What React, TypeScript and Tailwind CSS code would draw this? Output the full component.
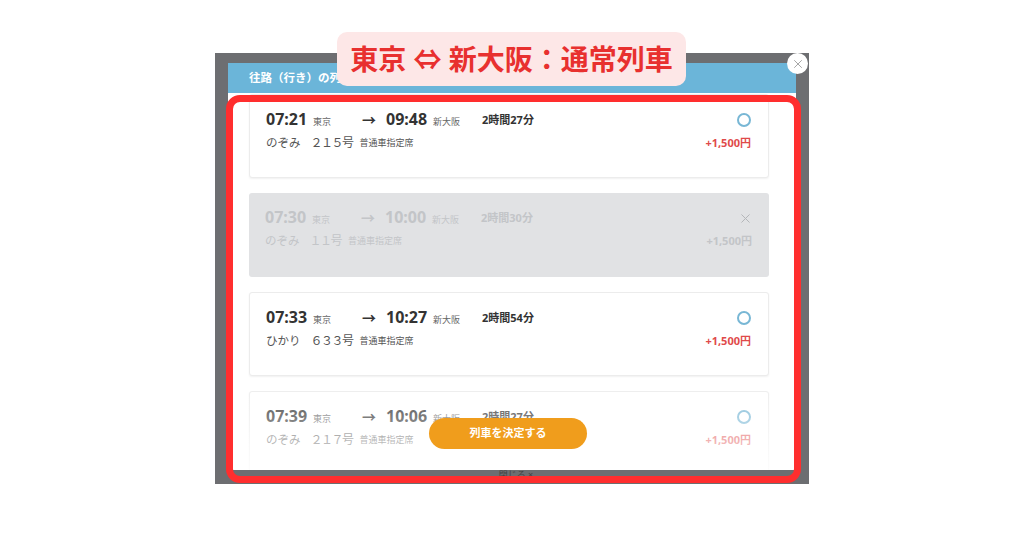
import { X } from "lucide-react"

type Train = {
	dep: string
	arr: string
	dur: string
	name: string
	num: string
	disabled?: boolean
}

const trains: Train[] = [
	{ dep: "07:21", arr: "09:48", dur: "2時間27分", name: "のぞみ", num: "２１５号" },
	{ dep: "07:30", arr: "10:00", dur: "2時間30分", name: "のぞみ", num: "１１号", disabled: true },
	{ dep: "07:33", arr: "10:27", dur: "2時間54分", name: "ひかり", num: "６３３号" },
	{ dep: "07:39", arr: "10:06", dur: "2時間27分", name: "のぞみ", num: "２１７号" },
]

const TrainCard = ({ t }: { t: Train }) => {
	const off = t.disabled
	return (
		<div className={`h-[84px] shrink-0 rounded-[3px] pl-[16px] pr-[17px] pt-[14px] ${off ? "bg-[#e1e2e4] text-[#c3c5c8]" : "bg-white border border-[#ececec] shadow-[0_1px_2px_rgba(0,0,0,0.06)] text-[#333]"}`}>
			<div className="flex items-center h-[22px]">
				<div className="w-[96px] flex items-baseline gap-[6px]">
					<span className="text-[16px] font-bold leading-none">{t.dep}</span>
					<span className={`text-[9px] ${off ? "" : "text-[#666]"}`}>東京</span>
				</div>
				<div className="w-[24px] text-[14px] font-bold leading-none">→</div>
				<div className="w-[96px] flex items-baseline gap-[6px]">
					<span className="text-[16px] font-bold leading-none">{t.arr}</span>
					<span className={`text-[9px] ${off ? "" : "text-[#666]"}`}>新大阪</span>
				</div>
				<div className="text-[11px] font-bold">{t.dur}</div>
				<div className="ml-auto">
					{off ? (
						<X size={15} strokeWidth={1.6} className="text-[#b4b6b9] mr-[-1px]" />
					) : (
						<div className="w-[14px] h-[14px] rounded-full border-2 border-[#78b7d5]" />
					)}
				</div>
			</div>
			<div className="flex items-center mt-[2px] h-[20px]">
				<span className={`text-[11.5px] ${off ? "" : "text-[#555]"}`}>{t.name}</span>
				<span className={`text-[12px] ml-[10px] tracking-[-1.5px] ${off ? "" : "text-[#555]"}`}>{t.num}</span>
				<span className={`text-[9px] ml-[7px] ${off ? "" : "text-[#555]"}`}>普通車指定席</span>
				<span className={`ml-auto text-[11px] font-bold ${off ? "" : "text-[#e04a4a]"}`}>+1,500円</span>
			</div>
		</div>
	)
}

export default function App() {
	return (
		<div className="relative w-[1024px] h-[538px] bg-white overflow-hidden pt-[53px] pl-[215px]" style={{ fontFamily: '"Noto Sans", "Noto Sans CJK JP", sans-serif' }}>
			{/* screenshot frame */}
			<div className="w-[594px] h-[431px] bg-[#6d6e71] px-[13px] pt-[10px] flex flex-col">
				<div className="relative h-[407px] bg-white flex flex-col overflow-hidden">
					<div className="h-[30px] shrink-0 bg-[#6bb5d9] flex items-center pl-[21px] text-white text-[11.5px] font-bold">
						往路（行き）の列
					</div>
					<div className="flex flex-col gap-[15px] pt-[1px] pl-[21px] pr-[27px]">
						{trains.map((t) => (
							<TrainCard key={t.dep} t={t} />
						))}
					</div>
					<div className="absolute left-0 right-0 bottom-0 h-[92px] bg-linear-to-b from-white/0 to-white/85" />
					<div className="absolute bottom-[21px] left-[201px] w-[158px] h-[31px] rounded-full bg-[#f09d1c] flex items-center justify-center text-white text-[11px] font-bold">
						列車を決定する
					</div>
				</div>
				<div className="h-[14px] flex items-start justify-center pl-[8px] text-[9px] leading-[10px] text-[#444]">
					閉じる ×
				</div>
			</div>

			{/* close button */}
			<div className="absolute left-[787px] top-[53px] w-[21px] h-[21px] rounded-full bg-white flex items-center justify-center text-[#999]">
				<X size={14} strokeWidth={1.5} />
			</div>

			{/* red highlight */}
			<div className="absolute left-[226px] top-[95px] w-[575px] h-[388px] border-[7px] border-[#ff2e2e] rounded-[14px]" />

			{/* title badge */}
			<div className="absolute left-[337px] top-[32px] w-[349px] h-[54px] rounded-[10px] bg-[#fde7e7] flex items-center justify-center text-[#e8302f] text-[28px] font-bold leading-none">
				東京 ⇔ 新大阪：通常列車
			</div>
		</div>
	)
}
